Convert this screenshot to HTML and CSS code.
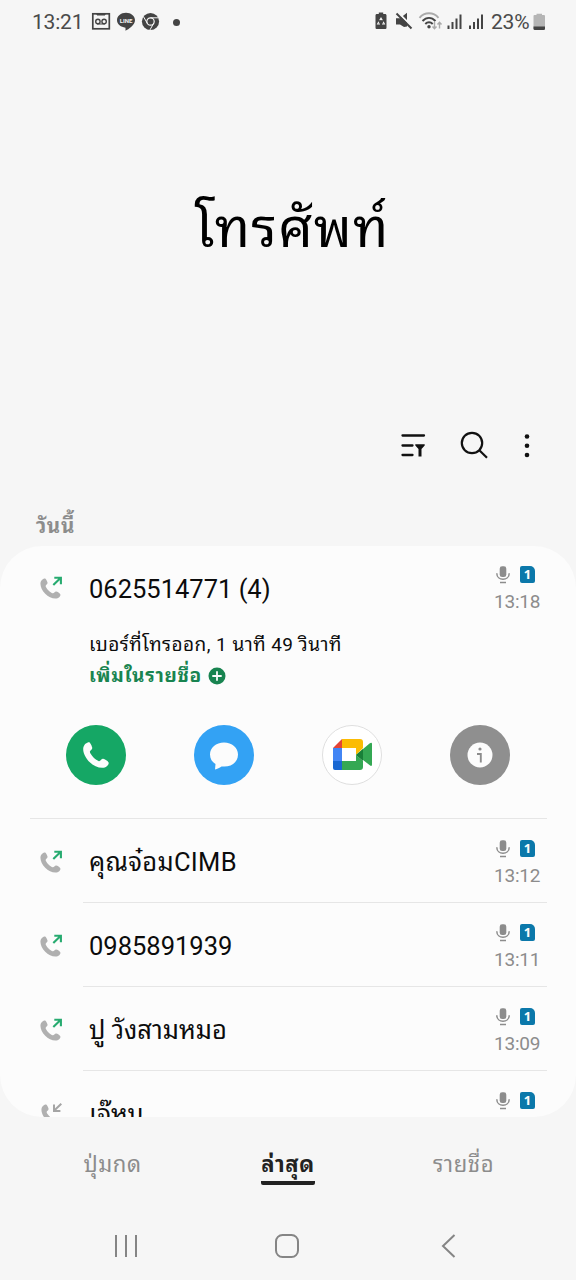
FILE: index.html
```html
<!DOCTYPE html>
<html lang="th">
<head>
<meta charset="utf-8">
<title>โทรศัพท์</title>
<link rel="stylesheet" href="styles.css">
</head>
<body>
<svg class="defs" width="0" height="0">
  <symbol id="handset" viewBox="0 0 24 24"><path d="M6.200 1C4.700.8 1.200 2.600 1 6.600C1 14.500 9.500 23 17.400 23C20.800 22.900 23.300 20.300 22.800 18.500C22.300 17.200 19.500 15.500 18.200 15.300C16.600 15.100 15.800 17.500 14.500 17.300C11.800 16.500 7.500 12.200 6.700 9.500C6.600 8.200 9 7.400 8.800 5.800C8.600 4.500 7.300 1.500 6.200 1Z"/></symbol>
  <symbol id="mic" viewBox="0 0 14 18"><rect x="3.700" y="0.300" width="6.600" height="10.800" rx="2.400"/><path d="M.8 7.300C.8 15.300 13.200 15.300 13.200 7.300M4 16.400H10" fill="none" stroke="currentColor" stroke-width="1.500"/></symbol>
  <symbol id="outgoing" viewBox="0 0 24 24"><use href="#handset" x="0" y="1.500" width="23" height="22"/><path class="out-arrow" d="M14.300 9L21.800 1.700M15.300 1.700H21.900V8.300"/></symbol>
  <symbol id="incoming" viewBox="0 0 24 24"><use href="#handset" x="1" y="1.500" width="23" height="22"/><path class="in-arrow" d="M22.300 1.700L15 8.700M15 2.500V8.900H21.400"/></symbol>
</svg>
<div class="screen">
  <header class="status">
    <span class="clock">13:21</span>
    <svg class="status-left" width="86" height="22" viewBox="0 0 86 22">
      <rect x="1.800" y="2.800" width="16.500" height="15" fill="none" stroke="#444" stroke-width="1.700"/><path d="M6 2.500H14V4H6ZM6 13H14" fill="#444" stroke="#444"/><circle cx="6.900" cy="10.500" r="2.200" fill="none" stroke="#444" stroke-width="1.400"/><circle cx="13.100" cy="10.500" r="2.200" fill="none" stroke="#444" stroke-width="1.400"/>
      <path d="M35 1.800C29.800 1.800 26 5 26 9.300C26 13.600 30 16 34.500 16.700L34.500 19.700C37.500 18.500 44 14 44 9.300C44 5 40 1.800 35 1.800Z" fill="#444"/><text x="35" y="11.500" class="line-logo">LINE</text>
      <circle cx="59.500" cy="10.500" r="8.600" fill="#444"/><circle cx="59.500" cy="10.500" r="3.700" fill="none" stroke="#f6f6f6" stroke-width="1.200"/><path d="M59.500 6.800H67.200M56.300 12.300L52.400 5.500M62.700 12.300L58.900 19" stroke="#f6f6f6" stroke-width="1"/>
    </svg>
    <span class="dot"></span>
    <svg class="status-right" width="114" height="22" viewBox="0 0 114 22">
      <path d="M4.800 3V1.500H9.200V3H11C12 3 12.500 3.600 12.500 4.500V16.500C12.500 17.500 12 18 11 18H3C2 18 1.500 17.500 1.500 16.500V4.500C1.500 3.500 2 3 3 3Z" fill="#444"/><path d="M5.700 9.200L7 7L8.300 9.200M9.200 10.700L10.400 13H8M6 13H3.600L4.800 10.700" fill="none" stroke="#f6f6f6" stroke-width="1.100"/>
      <path d="M22 7.300H26L33 1.700V15.500L30 16L26 13.500H22Z" fill="#444"/><path d="M24 1.500L38.500 16" stroke="#f6f6f6" stroke-width="2"/><path d="M22.500 2.500L37.500 17.500" stroke="#444" stroke-width="2"/>
      <g fill="none" stroke-width="1.900"><path d="M45.500 6.800C50.500.8 59.500.8 64.500 6.800" stroke="#aaa"/><path d="M48.500 10C52.500 5.800 57.500 5.800 61.500 10M51.300 13C53.500 10.600 56.500 10.600 58.700 13" stroke="#444"/></g><circle cx="55" cy="15.800" r="1.700" fill="#444"/>
      <path d="M60.500 11V17.500M58.500 15.500L60.500 17.700L62.500 15.500M65.500 17.500V11.500M63.500 13.500L65.500 11.300L67.500 13.500" fill="none" stroke="#aaa" stroke-width="1.400"/>
      <path d="M74.500 18V14.500M78.500 18V11M82.500 18V7.500M86.500 18V3.500M96 18V14.500M100 18V11M104 18V7.500M108 18V3.500" stroke="#444" stroke-width="2"/>
    </svg>
    <span class="percent">23%</span>
    <svg class="battery" width="13" height="18" viewBox="0 0 13 18"><path d="M3.500 2V.8H9V2H11Q12 2 12 3V15.500Q12 17 10.500 17H2Q.5 17 .5 15.500V3Q.5 2 1.500 2Z" fill="#b5b5b5"/><path d="M.5 13.500H12V15.500Q12 17 10.500 17H2Q.5 17 .5 15.500Z" fill="#444"/></svg>
  </header>

  <h1 class="title"><span>โทรศัพท์</span></h1>

  <div class="toolbar">
    <svg width="28" height="28" viewBox="0 0 28 28"><path d="M2.500 4.500H24M2.500 14.500H12.500M2.500 24H12.500" stroke="#111" stroke-width="2.300" stroke-linecap="round"/><path d="M15.300 13.200H24.700V14.500L21.500 18V25.500H18.500V18L15.300 14.500Z" fill="#111"/></svg>
    <svg width="28" height="28" viewBox="0 0 28 28" fill="none" stroke="#111" stroke-width="2.200"><circle cx="12" cy="12" r="10.200"/><path d="M19.300 19.300L27 26.800"/></svg>
    <svg width="8" height="28" viewBox="0 0 8 28" fill="#111"><circle cx="4" cy="5.500" r="2.300"/><circle cx="4" cy="14.800" r="2.300"/><circle cx="4" cy="24" r="2.300"/></svg>
  </div>

  <h2 class="day"><span>วันนี้</span></h2>

  <main class="card">
    <article class="call open">
      <div class="line">
        <svg class="kind"><use href="#outgoing"/></svg>
        <div class="name">0625514771 (4)</div>
        <div class="meta"><div class="marks"><svg class="mic"><use href="#mic"/></svg><span class="sim">1</span></div><time>13:18</time></div>
      </div>
      <div class="detail"><span>เบอร์ที่โทรออก, 1 นาที 49 วินาที</span></div>
      <div class="add"><span>เพิ่มในรายชื่อ</span><svg width="18" height="18" viewBox="0 0 18 18"><circle cx="9" cy="9" r="8.500" fill="#188450"/><path d="M9 4.300V13.700M4.300 9H13.700" stroke="#fcfcfc" stroke-width="1.800"/></svg></div>
      <div class="actions">
        <span class="round green"><svg width="28" height="28" viewBox="0 0 24 24" fill="#fcfcfc"><use href="#handset"/></svg></span>
        <span class="round blue"><svg width="30" height="30" viewBox="0 0 30 30"><path d="M15 2.500C7 2.500 1 7.500 1 14.500C1 19 3.200 22 6.500 24L6 29.500C8.500 29 10.500 27.500 12.500 26.400C21.500 27.700 29 22.500 29 14.500C29 7.500 23 2.500 15 2.500Z" fill="#fcfcfc"/></svg></span>
        <span class="round white"><svg width="40" height="34" viewBox="0 0 40 34"><path d="M1 10L10 1V10Z" fill="#e34436"/><path d="M10 1H28Q31 1 31 4V10L24 17V10H10Z" fill="#fbbc04"/><path d="M1 10H10V23H1Z" fill="#4285f4"/><path d="M1 23H10V32H3Q1 32 1 30Z" fill="#1967d2"/><path d="M10 23H24V17L31 23V29Q31 32 28 32H10Z" fill="#34a853"/><path d="M24 17L37.500 5.500Q40 4 40 6V26.500Q40 29 37.500 27L31 22Z" fill="#34a853"/><path d="M24 17L31 11V23Z" fill="#188038"/></svg></span>
        <span class="round gray"><svg width="26" height="26" viewBox="0 0 26 26"><circle cx="13" cy="13" r="12.500" fill="#fcfcfc"/><circle cx="13" cy="7" r="1.600" fill="#8c8c8c"/><path d="M10 12H13.800V20.500" fill="none" stroke="#8c8c8c" stroke-width="1.900"/></svg></span>
      </div>
    </article>
    <article class="call">
      <div class="line">
        <svg class="kind"><use href="#outgoing"/></svg>
        <div class="name thai">คุณจ๋อมCIMB</div>
        <div class="meta"><div class="marks"><svg class="mic"><use href="#mic"/></svg><span class="sim">1</span></div><time>13:12</time></div>
      </div>
    </article>
    <article class="call">
      <div class="line">
        <svg class="kind"><use href="#outgoing"/></svg>
        <div class="name">0985891939</div>
        <div class="meta"><div class="marks"><svg class="mic"><use href="#mic"/></svg><span class="sim">1</span></div><time>13:11</time></div>
      </div>
    </article>
    <article class="call">
      <div class="line">
        <svg class="kind"><use href="#outgoing"/></svg>
        <div class="name">ปู วังสามหมอ</div>
        <div class="meta"><div class="marks"><svg class="mic"><use href="#mic"/></svg><span class="sim">1</span></div><time>13:09</time></div>
      </div>
    </article>
    <article class="call">
      <div class="line">
        <svg class="kind"><use href="#incoming"/></svg>
        <div class="name">เจ๊หนุ</div>
        <div class="meta"><div class="marks"><svg class="mic"><use href="#mic"/></svg><span class="sim">1</span></div></div>
      </div>
    </article>
  </main>

  <nav class="tabs">
    <span class="tab">ปุ่มกด</span>
    <span class="tab active">ล่าสุด</span>
    <span class="tab">รายชื่อ</span>
  </nav>
  <footer class="keys">
    <svg width="24" height="24" viewBox="0 0 24 24"><path d="M2 1V23M12 1V23M22 1V23" stroke="#858585" stroke-width="2"/></svg>
    <svg width="24" height="24" viewBox="0 0 24 24"><rect x="1" y="1" width="22" height="22" rx="6.500" fill="none" stroke="#858585" stroke-width="2"/></svg>
    <svg width="24" height="24" viewBox="0 0 24 24"><path d="M17.500 1L6 12L17.500 23" fill="none" stroke="#858585" stroke-width="2"/></svg>
  </footer>
</div>
</body>
</html>
```

FILE: styles.css
```css
* { box-sizing: border-box; }
body { margin: 0; background: #f6f6f6; font-family: Roboto, "Noto Sans Thai Looped", "Noto Looped Thai", "Droid Sans Thai", Loma, Waree, Garuda, Umpush, "Noto Sans Thai", sans-serif; color: #0c0c0c; }
svg { display: block; flex: none; }
.defs { position: absolute; }
.screen { width: 576px; height: 1280px; display: flex; flex-direction: column; overflow: hidden; }
.status { height: 44px; flex: none; display: flex; align-items: center; padding: 0 30px 0 32px; color: #4a4a4a; font-size: 21px; }
.clock { width: 59px; letter-spacing: -0.2px; }
.line-logo { font: bold 6px Roboto, sans-serif; fill: #f6f6f6; text-anchor: middle; }
.dot { width: 7px; height: 7px; border-radius: 50%; background: #444; margin-left: -4px; }
.status-right { margin-left: 194px; }
.percent { margin-left: 3px; width: 43px; letter-spacing: -0.2px; }
.battery { margin-left: -1px; }
.title { margin: 0; height: 372px; flex: none; display: flex; justify-content: center; align-items: center; font-size: 54px; font-weight: 400; line-height: 80px; color: #000; padding: 0 0 2px 8px; letter-spacing: 1.3px; }
.toolbar { height: 58px; flex: none; display: flex; align-items: center; justify-content: flex-end; padding: 0 45px 1px 0; gap: 32px; }
.toolbar svg:last-child { margin-left: 3px; }
.day { margin: 0; height: 72px; flex: none; padding: 38px 0 0 36px; font-size: 20.5px; line-height: 28px; font-weight: 700; color: #8c8c8c; letter-spacing: 0.6px; }
.card { height: 571px; flex: none; background: #fcfcfc; border-radius: 42px; overflow: hidden; }
.call { height: 84px; }
.call.open { height: 272.4px; }
.line { height: 84px; display: flex; margin-left: 39px; }
.call + .call .line { margin-left: 83px; border-top: 1px solid #e6e6e6; margin-right: 29px; }
.call + .call .kind { margin-left: -44px; margin-top: 31px; }
.call + .call .meta { margin-right: 7px; padding-top: 21px; }
.call.open + .call .line { margin-left: 30px; }
.call.open + .call .kind { margin-left: 9px; }
.kind { width: 24px; height: 24px; margin-top: 30px; fill: #b0b0b0; }
.out-arrow { fill: none; stroke: #27ab70; stroke-width: 2.1; }
.in-arrow { fill: none; stroke: #a5a5a5; stroke-width: 2; }
.name { margin-left: 26px; flex: 1; height: 86px; line-height: 86px; font-size: 25.5px; white-space: nowrap; }
.name.thai { letter-spacing: 0.3px; }
.call + .call .name { line-height: 87px; height: 83px; }
.meta { width: 46px; margin-right: 36px; padding-top: 20px; }
.marks { display: flex; padding-left: 2px; gap: 10px; }
.mic { width: 14px; height: 18px; color: #8c8c8c; fill: #8c8c8c; }
.sim { width: 15px; height: 17px; background: #0b78aa; color: #fcfcfc; border-radius: 2px 5px 2px 2px; font: bold 13px/17px "Open Sans", sans-serif; text-align: center; }
time { display: block; margin-top: 4px; font-size: 19px; line-height: 27px; color: #8c8c8c; letter-spacing: -0.2px; white-space: nowrap; }
.detail { height: 31px; margin-left: 89px; font-size: 19px; line-height: 30px; letter-spacing: 0.45px; white-space: nowrap; }
.add { height: 29px; margin-left: 89px; display: flex; align-items: center; gap: 6px; color: #188450; font-weight: 700; font-size: 19px; line-height: 29px; letter-spacing: 0.7px; white-space: nowrap; }
.actions { display: flex; justify-content: space-between; padding: 35px 66px 0; }
.round { width: 60px; height: 60px; border-radius: 50%; display: grid; place-items: center; }
.green { background: #15a765; }
.blue { background: #33a2f4; }
.white { background: #fff; border: 1px solid #dfdfdf; }
.gray { background: #8f8f8f; }
.tabs { height: 95px; flex: none; display: grid; grid-template-columns: 175px 176px 175px; padding: 27px 25px 0; justify-items: center; align-items: start; }
.tab { font-size: 22px; line-height: 41px; height: 41px; color: #8c8c8c; letter-spacing: 0.6px; }
.tab.active { color: #222; font-weight: 700; border-bottom: 4px solid #222; border-radius: 2px; }
.keys { height: 68px; flex: none; display: flex; justify-content: space-between; padding: 22px 115px 0 114px; }
.keys svg:nth-child(2) { margin-left: -2px; }
```
